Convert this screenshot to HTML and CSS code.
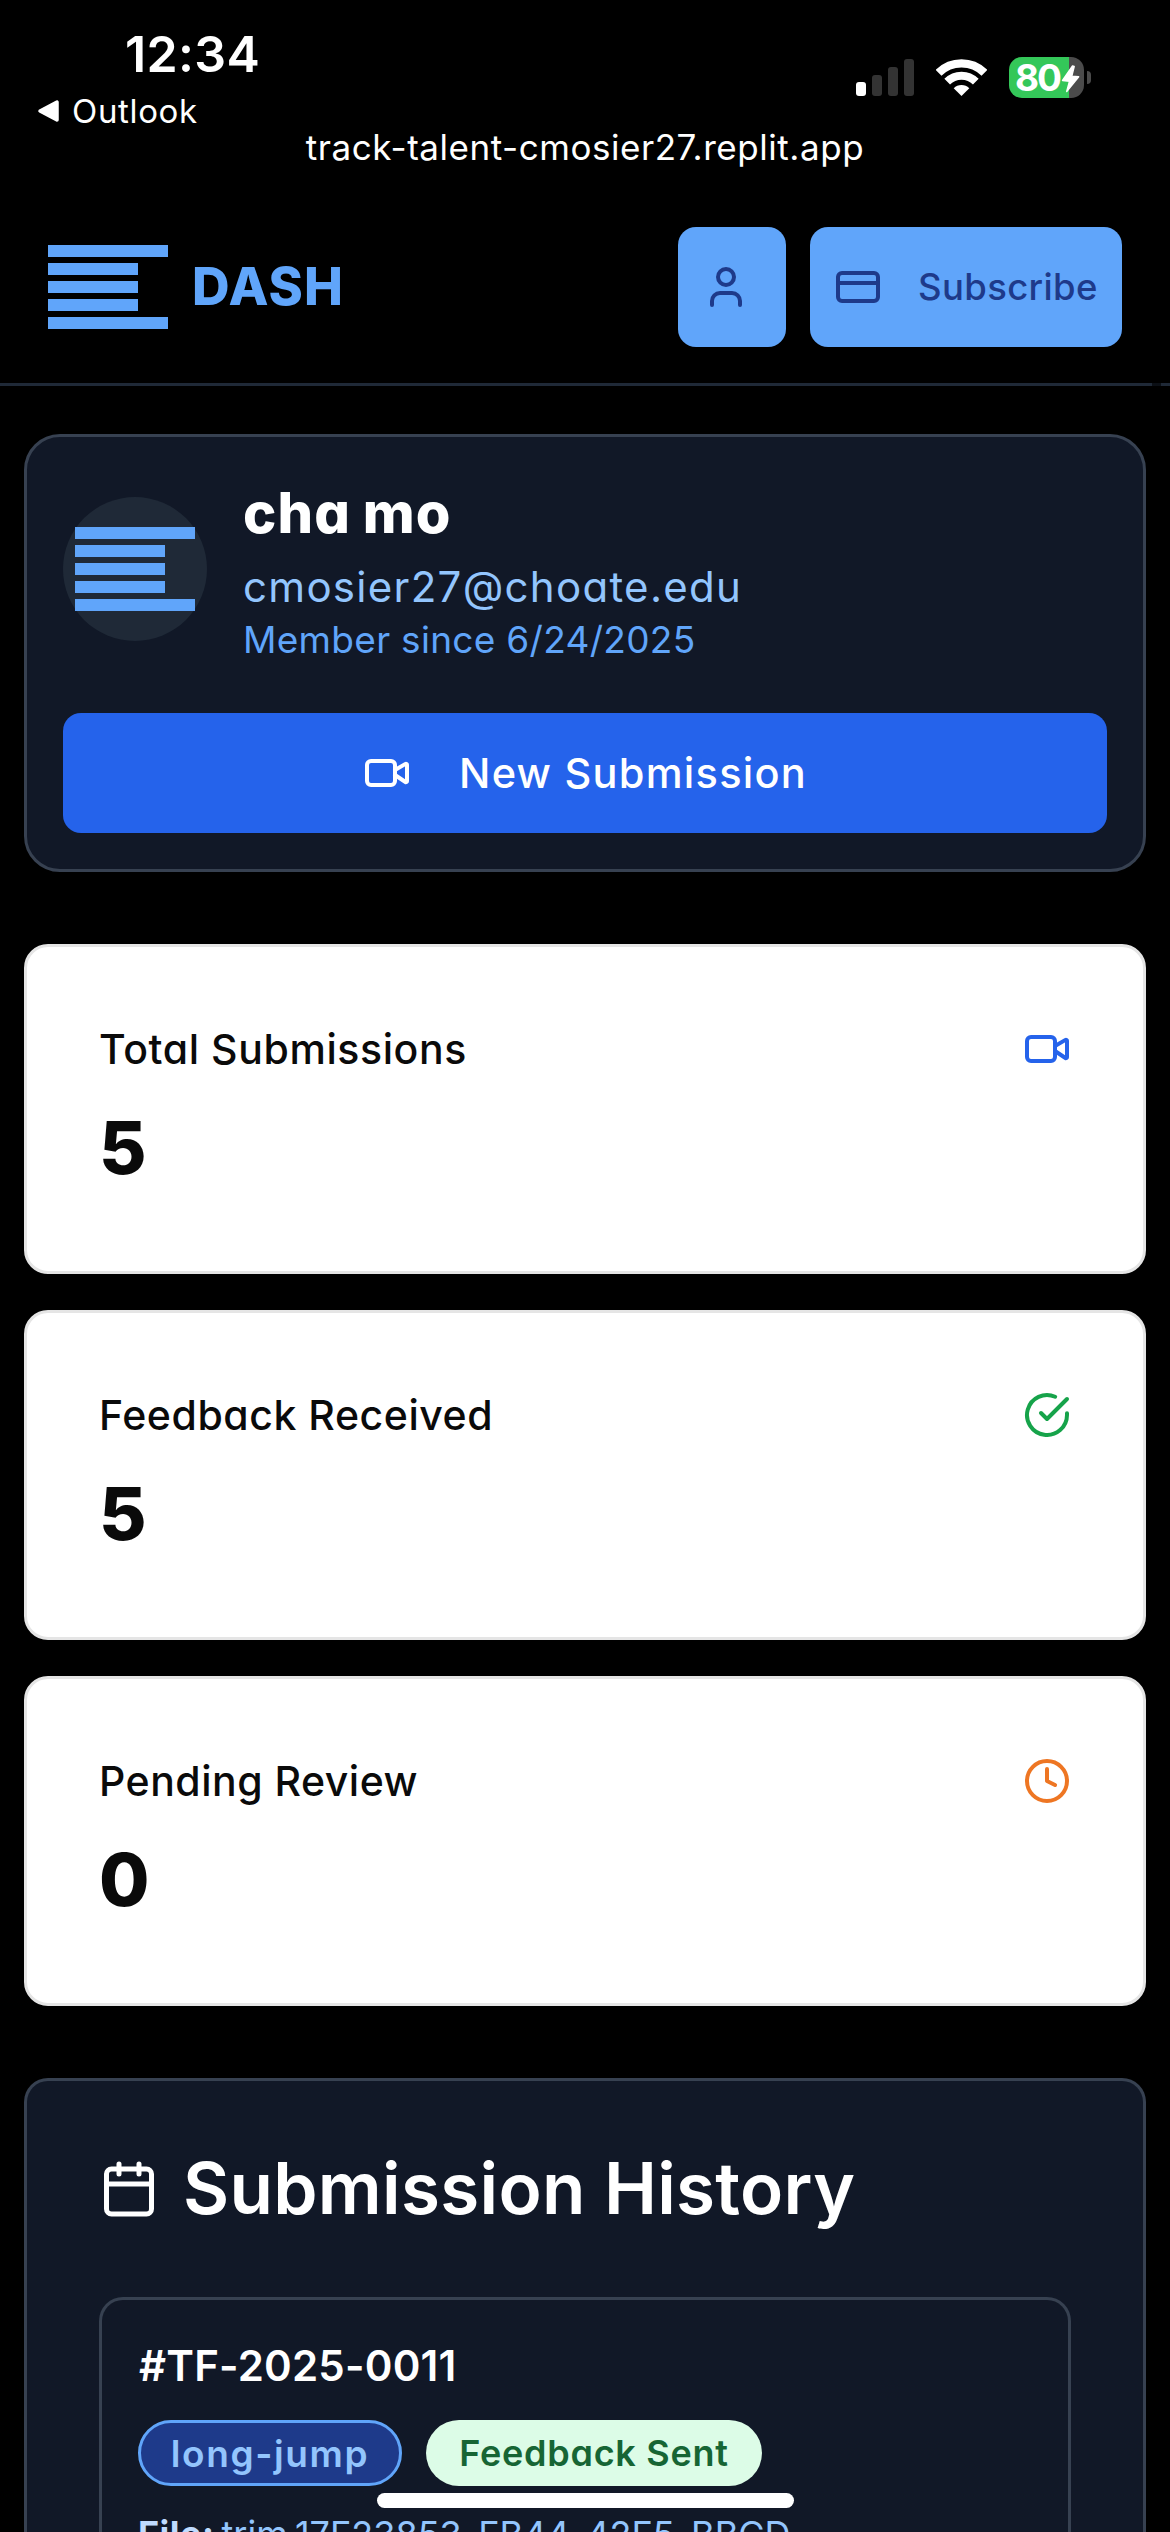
FILE: index.html
```html
<!DOCTYPE html>
<html lang="en">
<head>
<meta charset="utf-8">
<title>DASH</title>
<link rel="stylesheet" href="styles.css">
</head>
<body>
<div class="status">
  <div class="status-left">
    <div class="time">12:34</div>
    <div class="back">
      <svg width="23" height="24" viewBox="0 0 23 24"><path d="M3 12 20 3v18z" fill="#fff" stroke="#fff" stroke-width="3.5" stroke-linejoin="round"/></svg>
      <span class="back-label">Outlook</span>
    </div>
  </div>
  <div class="status-right">
    <svg width="58" height="37" viewBox="0 0 58 37"><rect y="23" width="10" height="14" rx="3" fill="#fff"/><g fill="#333"><rect x="16" y="16" width="10" height="21" rx="3"/><rect x="32" y="8" width="10" height="29" rx="3"/><rect x="48" width="10" height="37" rx="3"/></g></svg>
    <svg class="wifi" width="51" height="38" viewBox="0 0 51 38"><g fill="none" stroke="#fff"><path d="M2.6 13.8a32.6 32.6 0 0 1 45.8 0" stroke-width="8.2"/><path d="M11.2 22.7a20.2 20.2 0 0 1 28.6 0" stroke-width="8"/></g><path d="M25.5 37 17.7 29.2a11.2 11.2 0 0 1 15.6 0z" fill="#fff"/></svg>
    <div class="battery">
      <span class="battery-level">80</span>
      <svg class="bolt" width="19" height="28" viewBox="0 0 19 28"><path d="M11.5 1 1.5 15.5 8.5 16.2 5.7 26.5 17.7 11.7 10.8 11.2 13.2 1.5z" fill="#fff" stroke="#fff" stroke-width="1.4" stroke-linejoin="round"/></svg>
    </div>
    <span class="battery-cap"></span>
  </div>
</div>
<div class="url">track-talent-cmosier27.replit.app</div>

<header class="header">
  <div class="brand">
    <svg class="logo" width="120" height="84" viewBox="0 0 120 84"><path d="M0 0h120v12H0zM0 18h90v12H0zM0 36h90v12H0zM0 54h90v12H0zM0 72h120v12H0z"/></svg>
    <span class="brand-name">DASH</span>
  </div>
  <div class="actions">
    <button class="btn btn-light btn-user">
      <svg class="icon" viewBox="0 0 24 24"><path d="M19 21v-2a4 4 0 0 0-4-4H9a4 4 0 0 0-4 4v2"/><circle cx="12" cy="7" r="4"/></svg>
    </button>
    <button class="btn btn-light btn-subscribe">
      <svg class="icon" viewBox="0 0 24 24"><rect width="20" height="14" x="2" y="5" rx="2"/><path d="M2 10h20"/></svg>
      <span class="btn-label">Subscribe</span>
    </button>
  </div>
</header>

<main class="main">
  <section class="profile">
    <div class="profile-row">
      <div class="avatar">
        <svg class="logo" width="120" height="84" viewBox="0 0 120 84"><path d="M0 0h120v12H0zM0 18h90v12H0zM0 36h90v12H0zM0 54h90v12H0zM0 72h120v12H0z"/></svg>
      </div>
      <div class="info">
        <div class="name">cha mo</div>
        <div class="email">cmosier27@choate.edu</div>
        <div class="member">Member since 6/24/2025</div>
      </div>
    </div>
    <button class="btn btn-primary">
      <svg class="icon" viewBox="0 0 24 24"><path d="m16 13 5.223 3.482a.5.500 0 0 0 .777-.416V7.870a.5.500 0 0 0-.752-.432L16 10.500"/><rect x="2" y="6" width="14" height="12" rx="2"/></svg>
      <span class="primary-label">New Submission</span>
    </button>
  </section>

  <section class="stats">
    <div class="stat">
      <div class="stat-head"><span class="stat-title total">Total Submissions</span>
        <svg class="icon blue" viewBox="0 0 24 24"><path d="m16 13 5.223 3.482a.5.500 0 0 0 .777-.416V7.870a.5.500 0 0 0-.752-.432L16 10.500"/><rect x="2" y="6" width="14" height="12" rx="2"/></svg></div>
      <div class="stat-value">5</div>
    </div>
    <div class="stat">
      <div class="stat-head"><span class="stat-title feedback">Feedback Received</span>
        <svg class="icon green" viewBox="0 0 24 24"><path d="M22 11.080V12a10 10 0 1 1-5.930-9.140"/><path d="m9 11 3 3L22 4"/></svg></div>
      <div class="stat-value">5</div>
    </div>
    <div class="stat">
      <div class="stat-head"><span class="stat-title pending">Pending Review</span>
        <svg class="icon orange" viewBox="0 0 24 24"><circle cx="12" cy="12" r="10"/><path d="M12 6v6l4 2"/></svg></div>
      <div class="stat-value zero">0</div>
    </div>
  </section>

  <section class="history">
    <div class="history-head">
      <svg class="icon calendar" viewBox="0 0 24 24"><path d="M8 2v4M16 2v4M3 10h18"/><rect width="18" height="18" x="3" y="4" rx="2"/></svg>
      <h2 class="history-title">Submission History</h2>
    </div>
    <div class="entry">
      <div class="entry-id">#TF-2025-0011</div>
      <div class="badges">
        <span class="badge badge-event">long-jump</span>
        <span class="badge badge-sent">Feedback Sent</span>
      </div>
      <div class="file"><b class="file-key">File:</b><span class="file-name">trim.17F23853-FB44-42F5-BBCD-</span></div>
    </div>
  </section>
</main>
<div class="home-indicator"></div>
</body>
</html>
```

FILE: styles.css
```css
* { box-sizing: border-box; }
body {
  position: relative;
  margin: 0;
  width: 1170px;
  height: 2532px;
  overflow: hidden;
  background: #000;
  color: #fff;
  font-family: Inter, "Liberation Sans", sans-serif;
  font-feature-settings: "cv11";
  white-space: nowrap;
}
svg { display: block; flex: none; }

/* Phone status bar */
.status {
  display: flex;
  justify-content: space-between;
  height: 127px;
  padding-right: 79px;
  font-feature-settings: normal;
}
.status-left { padding-top: 29px; }
.time {
  padding-left: 125px;
  font-size: 50px;
  font-weight: 600;
  line-height: 50px;
  letter-spacing: 0.36px;
}
.back {
  display: flex;
  align-items: center;
  gap: 12px;
  margin-top: 12px;
  padding-left: 37px;
}
.back-label { font-size: 33px; line-height: 40px; letter-spacing: 0.65px; }
.status-right {
  display: flex;
  align-items: center;
  height: 41px;
  margin-top: 57px;
}
.wifi { margin: 0 22px; }
.battery {
  display: flex;
  align-items: center;
  width: 75px;
  height: 41px;
  padding-left: 6px;
  border-radius: 13px;
  background: linear-gradient(90deg, #34c759 60px, #4b4b4b 60px);
}
.battery-level {
  width: 46px;
  font-size: 37px;
  font-weight: 700;
  line-height: 41px;
  letter-spacing: -2px;
}
.bolt { margin-top: 2px; }
.battery-cap {
  width: 4px;
  height: 13px;
  margin-left: 3px;
  border-radius: 0 4px 4px 0;
  background: #4b4b4b;
}
.url {
  height: 64px;
  font-size: 35px;
  line-height: 40px;
  letter-spacing: 0.55px;
  text-align: center;
  font-feature-settings: normal;
}

/* App header */
.header {
  position: relative;
  display: flex;
  justify-content: space-between;
  align-items: center;
  height: 195px;
  padding: 0 48px;
  border-bottom: 3px solid #1f2937;
}
.header::after {
  content: "";
  position: absolute;
  right: 9px;
  bottom: -3px;
  width: 9px;
  height: 3px;
  background: #0b0f15;
}
.brand { display: flex; align-items: center; gap: 24px; }
.logo { fill: #60a5fa; }
.brand-name {
  color: #60a5fa;
  font-size: 52px;
  font-weight: 800;
  line-height: 60px;
  letter-spacing: 1.2px;
}
.actions { display: flex; gap: 24px; }
.btn {
  display: flex;
  align-items: center;
  height: 120px;
  margin: 0;
  padding: 0 24px;
  border: 0;
  border-radius: 18px;
  font: inherit;
}
.btn-light { gap: 36px; background: #60a5fa; color: #1e3a8a; }
.btn-user { width: 108px; }
.btn-subscribe { width: 312px; }
.btn-label { font-size: 36.5px; font-weight: 500; letter-spacing: 0.35px; }
.icon {
  width: 48px;
  height: 48px;
  fill: none;
  stroke: currentColor;
  stroke-width: 2;
  stroke-linecap: round;
  stroke-linejoin: round;
}

/* Profile */
.main { padding: 48px 24px 0; }
.profile {
  padding: 36px;
  border: 3px solid #374151;
  border-radius: 36px;
  background: #111827;
}
.profile-row {
  display: flex;
  align-items: center;
  gap: 36px;
  height: 192px;
  margin-bottom: 48px;
}
.avatar {
  display: flex;
  align-items: center;
  justify-content: center;
  width: 144px;
  height: 144px;
  border-radius: 50%;
  background: #1f2937;
}
.info { height: 192px; }
.name { font-size: 56px; font-weight: 800; line-height: 80px; letter-spacing: 1.2px; word-spacing: -2px; }
.email { color: #93c5fd; font-size: 42px; line-height: 67px; letter-spacing: 1.3px; }
.member { color: #60a5fa; font-size: 37px; line-height: 40px; letter-spacing: 0.3px; }
.btn-primary {
  justify-content: center;
  gap: 48px;
  width: 100%;
  background: #2563eb;
  color: #fff;
}
.primary-label { font-size: 41.5px; font-weight: 500; letter-spacing: 1.25px; }

/* Stat cards */
.stats { display: grid; gap: 36px; margin: 72px 0; }
.stat {
  height: 330px;
  padding: 72px;
  border: 3px solid #e5e5e5;
  border-radius: 24px;
  background: #fff;
  color: #0a0a0a;
}
.stat-head {
  display: flex;
  align-items: center;
  justify-content: space-between;
  height: 60px;
}
.stat-title { font-size: 41px; font-weight: 500; }
.total { letter-spacing: 0.6px; }
.feedback { letter-spacing: 0.55px; }
.pending { letter-spacing: 0.5px; }
.stat-value {
  margin-top: 21px;
  font-size: 73px;
  font-weight: 800;
  line-height: 96px;
}
.zero { letter-spacing: -1px; }
.blue { color: #2563eb; }
.green { color: #16a34a; }
.orange { color: #ee7623; }

/* Submission history */
.history {
  height: 454px;
  overflow: hidden;
  padding: 72px 72px 0;
  border: 3px solid #374151;
  border-bottom: 0;
  border-radius: 24px 24px 0 0;
  background: #111827;
}
.history-head { display: flex; align-items: center; gap: 24px; height: 72px; }
.calendar { width: 60px; height: 60px; }
.history-title {
  margin: 0 0 2px;
  font-size: 71px;
  font-weight: 600;
  line-height: 72px;
  letter-spacing: 0.3px;
}
.entry {
  height: 235px;
  margin-top: 72px;
  padding: 36px 36px 0;
  border: 3px solid #374151;
  border-bottom: 0;
  border-radius: 24px 24px 0 0;
}
.entry-id {
  padding-left: 1px;
  font-size: 42px;
  font-weight: 600;
  line-height: 60px;
  letter-spacing: 0.2px;
}
.badges { display: flex; gap: 24px; margin: 24px 0 18px; }
.badge {
  display: flex;
  align-items: center;
  justify-content: center;
  height: 66px;
  border-radius: 33px;
  font-size: 36px;
  font-weight: 600;
}
.badge-event {
  width: 264px;
  border: 3px solid #60a5fa;
  background: #1e3a8a;
  color: #93c5fd;
  font-size: 37px;
  letter-spacing: 1.6px;
}
.badge-sent { width: 336px; background: #dcfce7; color: #166534; letter-spacing: 0.73px; }
.file { display: flex; gap: 7px; font-size: 36px; line-height: 60px; }
.file-key { color: #bfdbfe; letter-spacing: 0.48px; }
.file-name { color: #93c5fd; font-feature-settings: "cv11", "case"; }

.home-indicator {
  position: absolute;
  left: 377px;
  top: 2493px;
  width: 417px;
  height: 15px;
  border-radius: 8px;
  background: #fff;
}
```
